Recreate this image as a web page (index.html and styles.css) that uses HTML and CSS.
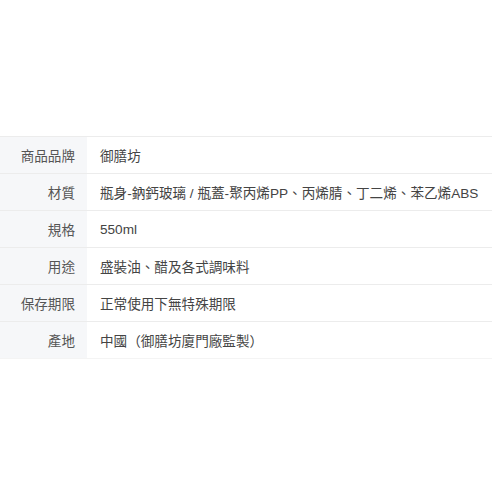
FILE: index.html
```html
<!DOCTYPE html>
<html lang="zh-Hant">
<head>
  <meta charset="UTF-8">
  <title>商品規格</title>
  <link rel="stylesheet" href="styles.css">
</head>
<body>
  <table class="spec-table">
    <tr>
      <th>商品品牌</th>
      <td>御膳坊</td>
    </tr>
    <tr>
      <th>材質</th>
      <td>瓶身-鈉鈣玻璃 / 瓶蓋-聚丙烯PP、丙烯腈、丁二烯、苯乙烯ABS</td>
    </tr>
    <tr>
      <th>規格</th>
      <td>550ml</td>
    </tr>
    <tr>
      <th>用途</th>
      <td>盛裝油、醋及各式調味料</td>
    </tr>
    <tr>
      <th>保存期限</th>
      <td>正常使用下無特殊期限</td>
    </tr>
    <tr>
      <th>產地</th>
      <td>中國（御膳坊廈門廠監製）</td>
    </tr>
  </table>
</body>
</html>
```

FILE: styles.css
```css
* { box-sizing: border-box; }
body {
  margin: 0;
  padding-top: 136px;
  background: #fff;
  font-family: 'Liberation Sans', 'Noto Sans CJK TC', sans-serif;
  font-size: 13.6px;
  color: #333;
}
.spec-table {
  width: 100%;
  border-collapse: collapse;
}
.spec-table tr {
  border-top: 1px solid #ececec;
}
.spec-table tr:last-child {
  border-bottom: 1px solid #f4f4f4;
}
.spec-table th {
  width: 87px;
  height: 37px;
  padding: 0 12px 0 0;
  background: #f6f7f9;
  color: #555;
  font-weight: normal;
  text-align: right;
  white-space: nowrap;
}
.spec-table td {
  padding: 0 0 0 13px;
  color: #444;
}
```
